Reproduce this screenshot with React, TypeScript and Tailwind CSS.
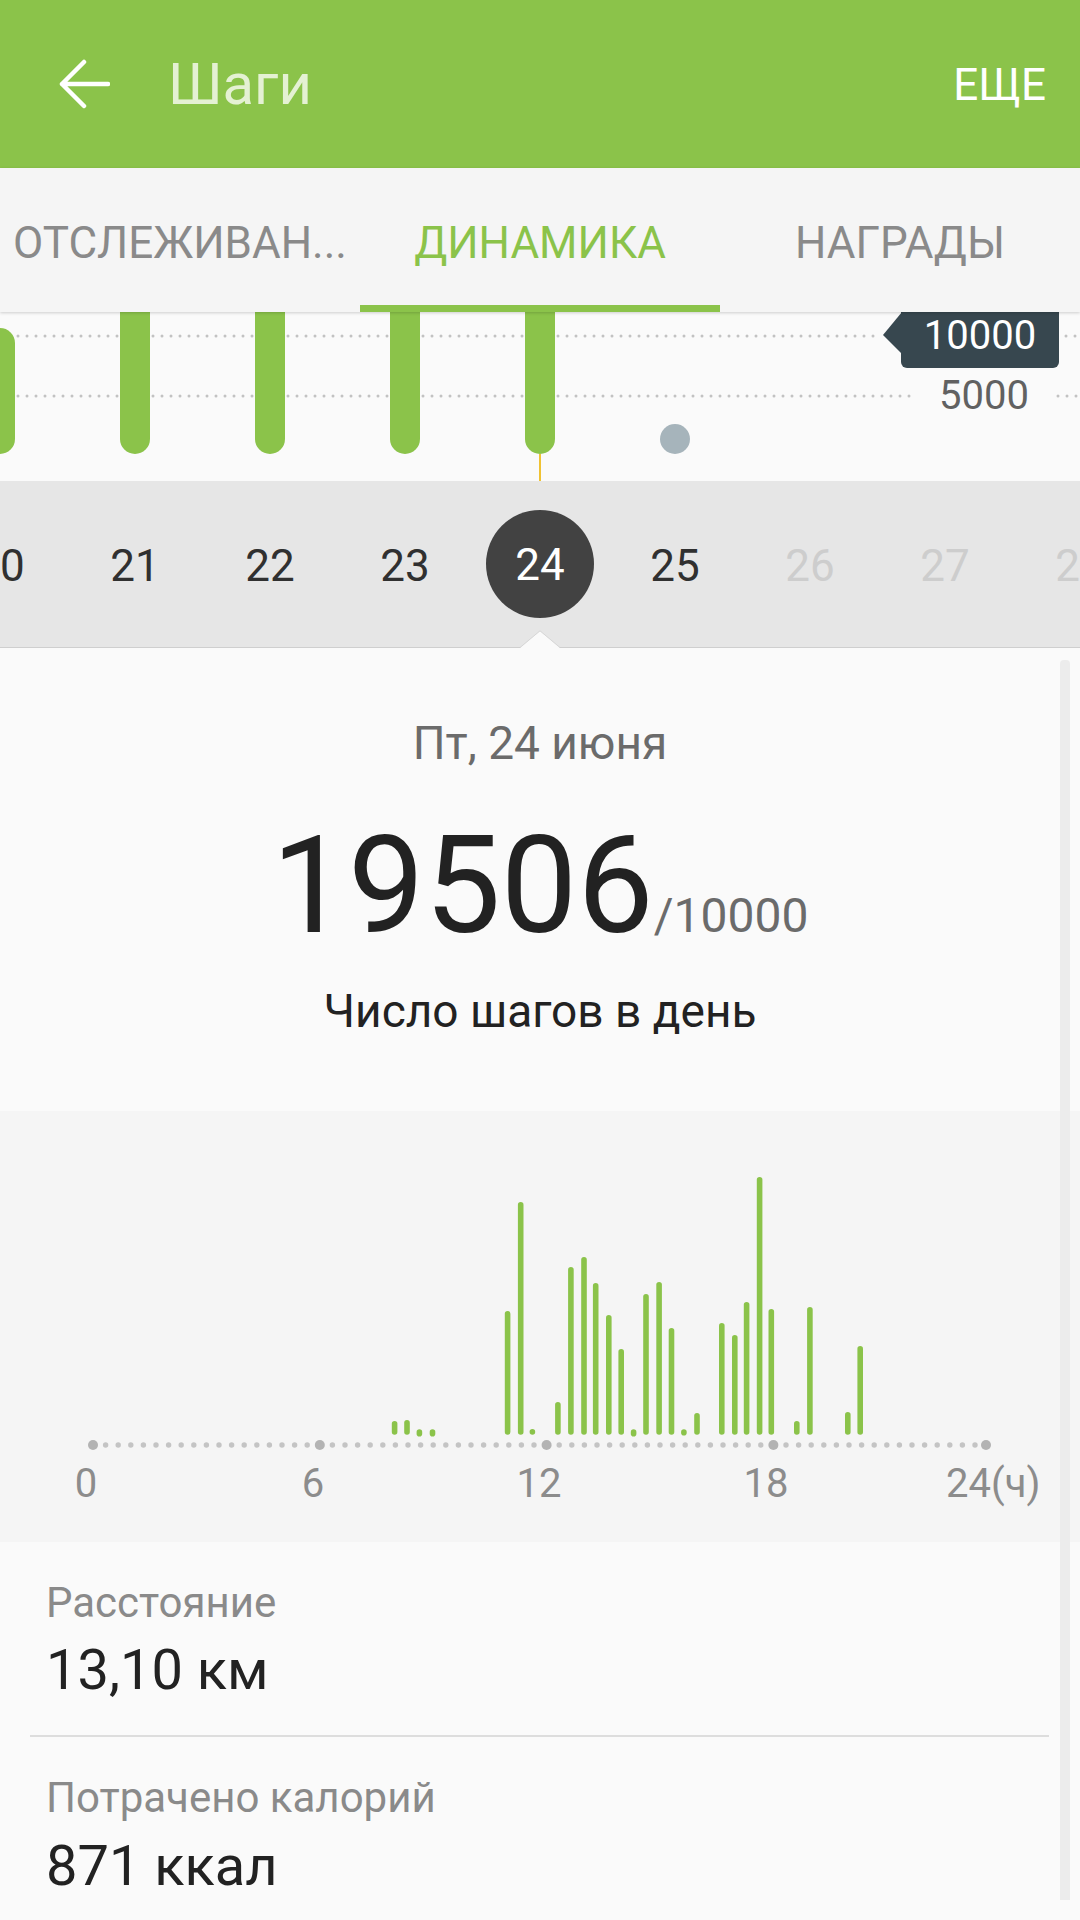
const days = [20, 21, 22, 23, 24, 25, 26, 27, 28];

// step bars of the day chart: x centre, top (px inside the chart box)
const steps: [number, number][] = [
  [394.6, 310], [407, 309], [419.4, 320], [432.5, 320],
  [507.6, 200], [520.7, 91], [532.4, 318],
  [557.9, 291], [570.9, 156], [584, 146], [595.7, 172], [608.8, 204], [621.2, 238],
  [633.6, 320], [646, 183], [659.1, 171], [671.5, 217], [683.9, 319], [697, 302],
  [721.8, 212], [734.8, 224], [746.6, 191], [759.6, 66], [771.3, 198],
  [796.8, 310], [809.9, 196], [847.8, 301], [860.2, 235],
];

const axisDots = Array.from({ length: 71 }, (_, k) => 93 + k * 12.6);

function WeekBars() {
  return (
    <svg className="absolute inset-0" width="1080" height="169" viewBox="0 0 1080 169">
      <line x1="0" y1="24" x2="878" y2="24" stroke="#c2c2c2" strokeWidth="3" strokeLinecap="round" strokeDasharray="0 9" />
      <line x1="1066" y1="24" x2="1080" y2="24" stroke="#c2c2c2" strokeWidth="3" strokeLinecap="round" strokeDasharray="0 9" />
      <line x1="0" y1="84" x2="912" y2="84" stroke="#c2c2c2" strokeWidth="3" strokeLinecap="round" strokeDasharray="0 9" />
      <line x1="1058" y1="84" x2="1080" y2="84" stroke="#c2c2c2" strokeWidth="3" strokeLinecap="round" strokeDasharray="0 9" />
      <rect x="-15" y="16" width="30" height="126" rx="15" fill="#8bc34a" />
      {[135, 270, 405, 540].map((x) => (
        <rect key={x} x={x - 15} y="-40" width="30" height="182" rx="15" fill="#8bc34a" />
      ))}
      <circle cx="675" cy="127" r="15" fill="#a6b4bb" />
      <line x1="540" y1="142" x2="540" y2="169" stroke="#f0c232" strokeWidth="2" />
    </svg>
  );
}

function DayChart() {
  return (
    <svg className="absolute inset-0" width="1080" height="431" viewBox="0 0 1080 431">
      {steps.map(([x, top]) => (
        <line key={x} x1={x} y1={top + 2.8} x2={x} y2={321} stroke="#8bc34a" strokeWidth="5.6" strokeLinecap="round" />
      ))}
      {axisDots.map((x, k) =>
        k % 18 === 0 ? (
          <circle key={k} cx={x} cy="334" r="5" fill="#b3b3b3" />
        ) : (
          <circle key={k} cx={x} cy="334" r="2.7" fill="#c4c4c4" />
        )
      )}
      <circle cx="986" cy="334" r="5" fill="#b3b3b3" />
      <g fill="#8c8c8c" fontSize="40" fontFamily="Roboto, sans-serif">
        <text x="86" y="386" textAnchor="middle">0</text>
        <text x="313" y="386" textAnchor="middle">6</text>
        <text x="539" y="386" textAnchor="middle">12</text>
        <text x="766" y="386" textAnchor="middle">18</text>
        <text x="946" y="386">24(ч)</text>
      </g>
    </svg>
  );
}

export default function App() {
  return (
    <div className="relative w-[1080px] h-[1920px] overflow-hidden bg-[#fafafa] font-['Roboto',sans-serif]">
      <header className="h-[168px] bg-[#8bc34a] flex items-center">
        <svg className="ml-[58px]" width="52" height="50" viewBox="0 0 52 50" fill="none">
          <path d="M4 25H50M26 3L4 25L26 47" stroke="white" strokeWidth="4.5" strokeLinecap="round" strokeLinejoin="round" />
        </svg>
        <h1 className="ml-[58px] text-[58px] leading-none text-[#e4f1d3]">Шаги</h1>
        <span className="ml-auto mr-[34px] pt-[2px] text-[44px] leading-none text-white">ЕЩЕ</span>
      </header>

      <nav className="relative z-10 h-[144px] bg-[#f5f5f5] grid grid-cols-3 shadow-[0_1px_3px_rgba(0,0,0,0.18)]">
        <div className="flex items-center justify-center pt-[6px] text-[44px] text-[#8a8a8a] whitespace-nowrap">ОТСЛЕЖИВАН...</div>
        <div className="relative flex items-center justify-center pt-[6px] text-[44px] text-[#8bc34a]">
          ДИНАМИКА
          <div className="absolute left-0 right-0 bottom-0 h-[7px] bg-[#8bc34a]" />
        </div>
        <div className="flex items-center justify-center pt-[6px] text-[44px] text-[#8a8a8a]">НАГРАДЫ</div>
      </nav>

      <section className="relative h-[169px] bg-[#fafafa] overflow-hidden">
        <WeekBars />
        <svg className="absolute left-[883px] top-0" width="19" height="42" viewBox="0 0 19 42">
          <polygon points="19,0 0,23 19,42" fill="#37474f" />
        </svg>
        <div className="absolute left-[901px] top-0 w-[158px] h-[56px] rounded-b-[6px] bg-[#37474f] flex justify-center pt-[4px] text-[40px] leading-[40px] text-white">
          10000
        </div>
        <div className="absolute left-[939px] top-[64px] text-[40px] leading-[40px] text-[#616161]">5000</div>
      </section>

      <section className="relative h-[167px] bg-[#e6e6e6] border-b border-[#cfcfcf]">
        <div className="h-full overflow-hidden">
          <div className="h-full flex items-center ml-[-67.5px]">
            {days.map((d) => (
              <div key={d} className="w-[135px] shrink-0 flex justify-center">
                {d === 24 ? (
                  <span className="w-[108px] h-[108px] rounded-full bg-[#424242] flex items-center justify-center pt-[2px] text-[44px] text-white">
                    {d}
                  </span>
                ) : (
                  <span className={d > 25 ? 'pt-[3px] text-[44px] text-[#cdcdcd]' : 'pt-[3px] text-[44px] text-[#303030]'}>{d}</span>
                )}
              </div>
            ))}
          </div>
        </div>
        <svg className="absolute left-[520px] bottom-[-1px]" width="40" height="18" viewBox="0 0 40 18">
          <polygon points="0,18 20,1 40,18" fill="#fafafa" />
          <polyline points="0,17.5 20,0.8 40,17.5" fill="none" stroke="#d6d6d6" strokeWidth="1" />
        </svg>
      </section>

      <main className="relative">
        <p className="pt-[67px] text-center text-[46px] leading-[56px] text-[#6b6b6b]">Пт, 24 июня</p>
        <div className="mt-[47px] flex justify-center items-baseline">
          <span className="text-[136px] leading-[136px] text-[#222222]">19506</span>
          <span className="text-[48px] leading-none text-[#6b6b6b]">/10000</span>
        </div>
        <p className="mt-[29px] text-center text-[46px] leading-[56px] text-[#222222]">Число шагов в день</p>

        <div className="relative mt-[72px] h-[431px] bg-[#f5f5f5]">
          <DayChart />
        </div>

        <div className="pl-[46px] pt-[36px]">
          <p className="text-[42px] leading-[50px] text-[#8a8a8a]">Расстояние</p>
          <p className="mt-[10px] text-[56px] leading-[64px] text-[#222222]">13,10 км</p>
        </div>
        <div className="mt-[33px] ml-[30px] w-[1019px] h-[2px] bg-[#dddddd]" />
        <div className="pl-[46px] pt-[36px]">
          <p className="text-[42px] leading-[50px] text-[#8a8a8a]">Потрачено калорий</p>
          <p className="mt-[11px] text-[56px] leading-[64px] text-[#222222]">871 ккал</p>
        </div>

        <div className="absolute left-[1060px] top-[12px] w-[10px] h-[1240px] rounded-t-[4px] bg-[#ececec]" />
      </main>
    </div>
  );
}
